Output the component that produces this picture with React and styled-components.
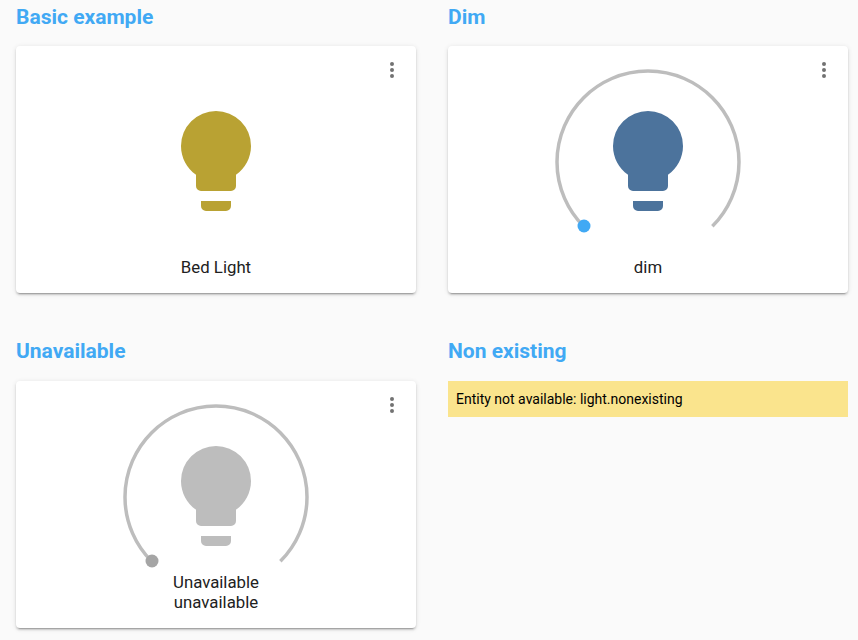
import React from "react";
import styled, { createGlobalStyle } from "styled-components";

const GlobalStyle = createGlobalStyle`
  html, body {
    margin: 0;
    background: #fafafa;
    font-family: Roboto, "Liberation Sans", sans-serif;
  }
`;

const Page = styled.div`
  display: grid;
  grid-template-columns: 400px 400px;
  column-gap: 32px;
  row-gap: 46px;
  padding: 4.5px 10px 12px 16px;
`;

const Section = styled.section`
  display: flex;
  flex-direction: column;
  gap: 17.5px;
`;

const Heading = styled.h2`
  margin: 0;
  font-size: 21px;
  line-height: 24px;
  font-weight: 700;
  color: #41a9f4;
`;

const Card = styled.div`
  position: relative;
  box-sizing: border-box;
  height: 247px;
  padding: 24px 0 16px;
  display: flex;
  flex-direction: column;
  justify-content: space-between;
  align-items: center;
  background: #fff;
  border-radius: 4px;
  box-shadow: 0 2px 2px 0 rgba(0, 0, 0, 0.14), 0 1px 5px 0 rgba(0, 0, 0, 0.12),
    0 3px 1px -2px rgba(0, 0, 0, 0.2);
`;

const MenuIcon = styled.svg`
  position: absolute;
  top: 12px;
  right: 12px;
  width: 24px;
  height: 24px;
  fill: #727272;
`;

const Stage = styled.div`
  position: relative;
  width: 184px;
  height: 166px;
  display: flex;
  justify-content: center;
  padding-top: 31px;
  box-sizing: border-box;
`;

const Arc = styled.svg`
  position: absolute;
  top: 0;
  left: 0;
  width: 184px;
  height: 166px;
  overflow: visible;
`;

const Bulb = styled.svg`
  width: 120px;
  height: 120px;
  fill: ${props => props.color};
`;

const Name = styled.div`
  font-size: 16.8px;
  line-height: 20px;
  color: #212121;
  text-align: center;
`;

const Warning = styled.div`
  padding: 8px;
  font-size: 14px;
  line-height: 20px;
  color: #000;
  background: #fae48d;
`;

function LightCard({ color, handle, names }) {
  return (
    <Card>
      <MenuIcon viewBox="0 0 24 24">
        <path d="M12,16A2,2 0 0,1 14,18A2,2 0 0,1 12,20A2,2 0 0,1 10,18A2,2 0 0,1 12,16M12,10A2,2 0 0,1 14,12A2,2 0 0,1 12,14A2,2 0 0,1 10,12A2,2 0 0,1 12,10M12,4A2,2 0 0,1 14,6A2,2 0 0,1 12,8A2,2 0 0,1 10,6A2,2 0 0,1 12,4Z" />
      </MenuIcon>
      <Stage>
        {handle && (
          <Arc viewBox="0 0 184 166">
            <path
              d="M27.65,156.35A91,91 0 1,1 156.35,156.35"
              fill="none"
              stroke="#bdbdbd"
              strokeWidth="3.5"
            />
            <circle cx="28" cy="156" r="6.5" fill={handle} />
          </Arc>
        )}
        <Bulb color={color} viewBox="0 0 24 24">
          <path d="M12,2A7,7 0 0,0 5,9C5,11.38 6.19,13.47 8,14.74V17A1,1 0 0,0 9,18H15A1,1 0 0,0 16,17V14.74C17.81,13.47 19,11.38 19,9A7,7 0 0,0 12,2M9,21A1,1 0 0,0 10,22H14A1,1 0 0,0 15,21V20H9V21Z" />
        </Bulb>
      </Stage>
      <Name>
        {names.map(name => (
          <div key={name}>{name}</div>
        ))}
      </Name>
    </Card>
  );
}

export default function App() {
  return (
    <>
      <GlobalStyle />
      <Page>
        <Section>
          <Heading>Basic example</Heading>
          <LightCard color="#b9a233" names={["Bed Light"]} />
        </Section>
        <Section>
          <Heading>Dim</Heading>
          <LightCard color="#4c739c" handle="#41a9f4" names={["dim"]} />
        </Section>
        <Section>
          <Heading>Unavailable</Heading>
          <LightCard
            color="#bdbdbd"
            handle="#a5a5a5"
            names={["Unavailable", "unavailable"]}
          />
        </Section>
        <Section>
          <Heading>Non existing</Heading>
          <Warning>Entity not available: light.nonexisting</Warning>
        </Section>
      </Page>
    </>
  );
}
